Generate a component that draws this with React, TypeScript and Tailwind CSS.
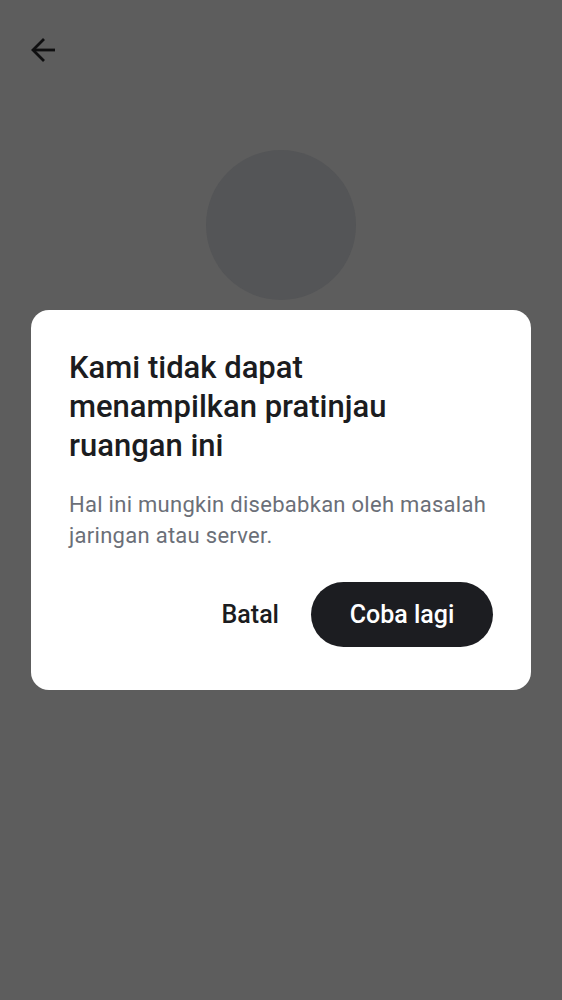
import React from "react";

export default function App() {
  return (
    <div
      className="relative w-[562px] h-[1000px] bg-[#5d5d5d] overflow-hidden"
      style={{ fontFamily: "Roboto, 'Noto Sans', sans-serif" }}
    >
      <div className="flex flex-col items-center">
        <div className="w-full h-[100px] flex items-start pt-[36px] pl-[29px]">
          <svg width="28" height="28" viewBox="0 0 28 28" fill="none">
            <path d="M26 14H4" stroke="#0f0f10" strokeWidth="2.8" />
            <path d="M15 3L4 14L15 25" stroke="#0f0f10" strokeWidth="2.8" />
          </svg>
        </div>
        <div className="mt-[50px] w-[150px] h-[150px] rounded-full bg-[#545557]" />
      </div>

      <div className="absolute inset-0 flex items-start justify-center pt-[310px]">
        <div className="w-[500px] bg-white rounded-[18px] px-[38px] pt-[38px] pb-[43px]">
          <h1 className="text-[31px] leading-[39px] font-medium text-[#1b1c20]">
            Kami tidak dapat menampilkan pratinjau ruangan ini
          </h1>
          <p className="mt-[24px] text-[22px] leading-[31px] tracking-[0.28px] text-[#6b6f78]">
            Hal ini mungkin disebabkan oleh masalah jaringan atau server.
          </p>
          <div className="mt-[31px] flex items-center justify-end gap-[10px]">
            <button className="h-[65px] px-[22px] text-[25px] font-medium text-[#1b1c20]">
              Batal
            </button>
            <button className="h-[65px] w-[182px] rounded-full bg-[#1c1d21] text-[25px] font-medium text-white">
              Coba lagi
            </button>
          </div>
        </div>
      </div>
    </div>
  );
}
